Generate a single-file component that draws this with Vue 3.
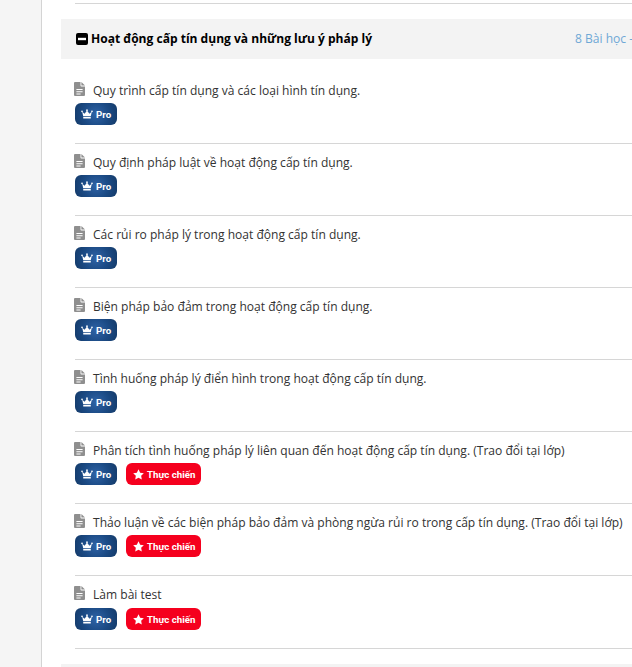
<script setup>
const lessons = [
  { title: 'Quy trình cấp tín dụng và các loại hình tín dụng.', real: false },
  { title: 'Quy định pháp luật về hoạt động cấp tín dụng.', real: false },
  { title: 'Các rủi ro pháp lý trong hoạt động cấp tín dụng.', real: false },
  { title: 'Biện pháp bảo đảm trong hoạt động cấp tín dụng.', real: false },
  { title: 'Tình huống pháp lý điển hình trong hoạt động cấp tín dụng.', real: false },
  { title: 'Phân tích tình huống pháp lý liên quan đến hoạt động cấp tín dụng. (Trao đổi tại lớp)', real: true },
  { title: 'Thảo luận về các biện pháp bảo đảm và phòng ngừa rủi ro trong cấp tín dụng. (Trao đổi tại lớp)', real: true },
  { title: 'Làm bài test', real: true },
]
</script>

<template>
  <div class="page">
    <aside class="rail"></aside>
    <main class="content">
      <div class="top-rule"></div>
      <header class="section-head">
        <h2 class="section-title">
          <svg class="minus" viewBox="0 0 12 12" width="12" height="12">
            <rect width="12" height="12" rx="2" fill="#000" />
            <rect x="2" y="4.8" width="8" height="2.4" fill="#fff" />
          </svg>
          Hoạt động cấp tín dụng và những lưu ý pháp lý
        </h2>
        <span class="section-meta">8 Bài học - 16 giờ</span>
      </header>
      <ul class="lessons">
        <li v-for="l in lessons" :key="l.title" class="lesson">
          <div class="lesson-title">
            <svg class="doc" viewBox="0 0 11 14" width="11" height="14">
              <path fill="#8f8f8f" fill-rule="evenodd" d="M0 1a1 1 0 0 1 1-1h5.5v3.6a.9.9 0 0 0 .9.9H11V13a1 1 0 0 1-1 1H1a1 1 0 0 1-1-1zM2.4 7v1h6.2V7zM2.4 9.2v1h6.2v-1zM2.4 11.4v1h4.2v-1z" />
              <path fill="#8f8f8f" d="M7.4 0 11 3.6H7.4z" />
            </svg>
            <span>{{ l.title }}</span>
          </div>
          <div class="badges">
            <span class="badge pro">
              <svg viewBox="0 0 14 11" width="12" height="10">
                <circle cx="1.2" cy="2.4" r="1" fill="#fff" />
                <circle cx="7" cy="1" r="1" fill="#fff" />
                <circle cx="12.8" cy="2.4" r="1" fill="#fff" />
                <path fill="#fff" d="M1.4 3 4.2 5.2 7 1.4 9.8 5.2 12.6 3 11.4 8H2.6zM2.6 9h8.8v1.8H2.6z" />
              </svg>
              Pro
            </span>
            <span v-if="l.real" class="badge real">
              <svg viewBox="0 0 12 12" width="11" height="11">
                <path fill="#fff" d="M6 .4l1.8 3.6 4 .6-2.9 2.8.7 4L6 9.5l-3.6 1.9.7-4L.2 4.6l4-.6z" />
              </svg>
              Thực chiến
            </span>
          </div>
        </li>
      </ul>
      <div class="next-head"></div>
    </main>
  </div>
</template>

<style scoped>
.page {
  display: flex;
  width: 632px;
  height: 667px;
  overflow: hidden;
  background: #fff;
  font-family: "Open Sans", "Noto Sans", sans-serif;
  color: #333;
}
.rail {
  flex: 0 0 41px;
  background: #f5f5f5;
  border-right: 1px solid #d4d4d4;
}
.content {
  flex: 1 0 590px;
  min-width: 0;
  padding: 3px 0 0 19px;
  overflow: hidden;
}
.top-rule {
  height: 1px;
  margin-left: 14px;
  background: #d6d6d6;
}
.section-head {
  display: flex;
  align-items: center;
  justify-content: space-between;
  box-sizing: border-box;
  width: 640px;
  height: 40px;
  margin-top: 15px;
  padding: 0 0 1px 15px;
  background: #f3f3f3;
}
.section-title {
  display: flex;
  align-items: center;
  gap: 3px;
  margin: 0;
  font-size: 12.05px;
  font-weight: 700;
  color: #000;
  white-space: nowrap;
}
.section-meta {
  flex: 0 0 auto;
  width: 126px;
  font-size: 12.05px;
  color: #6fa8d6;
  white-space: nowrap;
  overflow: hidden;
}
.lessons {
  list-style: none;
  margin: 13px 0 0;
  padding: 0 0 0 14px;
}
.lesson {
  box-sizing: border-box;
  height: 72px;
  padding-top: 10px;
  border-bottom: 1px solid #d6d6d6;
  white-space: nowrap;
}
.lesson:last-child {
  height: 73px;
}
.lesson:last-child .badges {
  margin-top: 4px;
}
.lesson-title {
  display: flex;
  align-items: center;
  gap: 8px;
  height: 18px;
  font-size: 12.05px;
  line-height: 18px;
}
.doc {
  flex: none;
  margin: -4px 0 0 -1px;
}
.badges {
  display: flex;
  gap: 9px;
  margin-top: 3px;
  font-family: Roboto, "Noto Sans", sans-serif;
}
.badge {
  display: inline-flex;
  align-items: center;
  gap: 3px;
  height: 22px;
  box-sizing: border-box;
  border-radius: 6px;
  color: #fff;
  font-size: 9.7px;
  font-weight: 700;
}
.pro {
  width: 42px;
  padding-left: 6px;
  background: radial-gradient(circle at 50% 50%, #2f63a6 0%, #1b4a84 55%, #143a68 100%);
}
.real {
  width: 75px;
  padding-left: 7px;
  background: #f5001e;
}
.next-head {
  width: 640px;
  height: 10px;
  margin-top: 15px;
  background: #f3f3f3;
}
</style>
